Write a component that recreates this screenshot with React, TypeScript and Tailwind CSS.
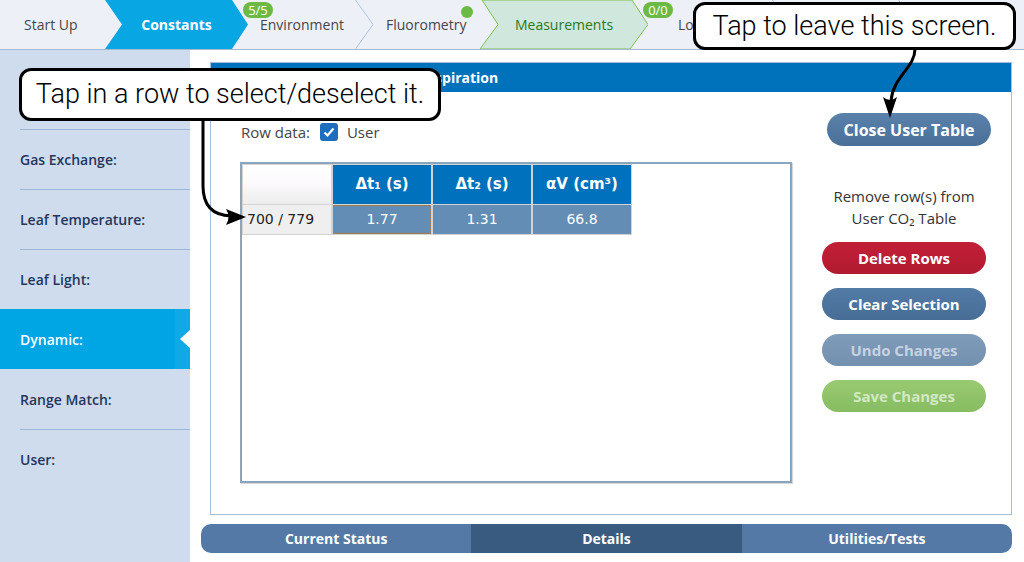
import React from "react";

const sideItems = [
  { name: "" },
  { name: "Gas Exchange:" },
  { name: "Leaf Temperature:" },
  { name: "Leaf Light:" },
  { name: "Dynamic:", active: true },
  { name: "Range Match:" },
  { name: "User:" },
];

const Sep = () => (
  <svg className="absolute left-0 top-0 h-[49px] w-[20px]" viewBox="0 0 20 49">
    <polyline points="0.5,0 18,24.5 0.5,49" fill="none" stroke="#a9c4e2" strokeWidth="1" />
  </svg>
);

const Badge = ({ text, left }: { text: string; left: number }) => (
  <span
    className="absolute top-[2px] h-[16px] w-[30px] rounded-full bg-[#6cb944] text-white text-[13px] leading-[16px] text-center"
    style={{ left }}
  >
    {text}
  </span>
);

const TopBar = () => (
  <div className="flex h-[50px] bg-[#eef0f7] border-b border-[#a5b9d2] text-[14px] font-medium text-[#474747]">
    <div className="relative w-[105px] flex items-center pl-[24px]">Start Up</div>
    <div className="relative w-[143px] flex items-center justify-center">
      <svg className="absolute inset-0" width="143" height="49" viewBox="0 0 143 49">
        <polygon points="0,0 127,0 143,24.5 127,49 0,49 17,24.5" fill="#09a6e4" />
      </svg>
      <span className="relative text-white font-bold">Constants</span>
    </div>
    <div className="relative w-[107px] flex items-center pl-[12px]">
      <Badge text="5/5" left={-5} />
      Environment
    </div>
    <div className="relative w-[125px] flex items-center pl-[31px]">
      <Sep />
      Fluorometry
      <span className="absolute left-[106px] top-[6px] w-[12px] h-[12px] rounded-full bg-[#6cb944]" />
    </div>
    <div className="relative w-[168px] flex items-center justify-center">
      <svg className="absolute inset-0" width="168" height="49" viewBox="0 0 168 49">
        <polygon
          points="2,0 152,0 168,24.5 150,49 0,49 18,24.5"
          fill="#cfe7dd"
          stroke="#7cc151"
          strokeWidth="1"
        />
      </svg>
      <span className="relative text-[#2c7a1b]">Measurements</span>
      <Badge text="0/0" left={163} />
    </div>
    <div className="relative w-[124px] flex items-center pl-[30px]">Log Files</div>
    <div className="relative w-[126px] flex items-center pl-[30px]">
      <Sep />
    </div>
    <div className="relative flex-1 flex items-center pl-[30px]">
      <Sep />
    </div>
  </div>
);

const Sidebar = () => (
  <aside className="w-[190px] bg-[#cfdcee] pt-[19px] text-[14px] font-semibold text-[#25365b]">
    {sideItems.map((item, i) => {
      const prevActive = i > 0 && sideItems[i - 1].active;
      const showLine = i > 0 && !item.active && !prevActive;
      if (item.active) {
        return (
          <div key={i} className="relative h-[60px] flex items-center pl-[20px] bg-[#00a5e4] text-white">
            <span>{item.name}</span>
            <div className="absolute right-0 top-0 h-full w-[15px] bg-[#0fa9e8]" />
            <svg className="absolute right-0 top-[21px]" width="10" height="18" viewBox="0 0 10 18">
              <polygon points="10,0 0,9 10,18" fill="#ffffff" />
            </svg>
          </div>
        );
      }
      return (
        <div key={i} className="pl-[20px]">
          <div className={`h-[60px] flex items-center ${showLine ? "border-t border-[#9fb6d4]" : ""}`}>
            {item.name}
          </div>
        </div>
      );
    })}
  </aside>
);

const Btn = ({ label, cls }: { label: string; cls: string }) => (
  <button className={`w-[164px] h-[32px] rounded-full text-[15px] font-bold ${cls}`}>{label}</button>
);

const DataTable = () => (
  <div className="w-[552px] h-[321px] border-2 border-[#8aa6bf] bg-white shadow-[1px_1px_1px_rgba(0,0,0,0.15)]">
    <div className="inline-grid grid-cols-[88px_98px_98px_98px] grid-rows-[39px_29px] gap-x-[2px] gap-y-px bg-[#d3d3d3] p-px font-['DejaVu_Sans',sans-serif] text-[14px]">
      <div className="bg-linear-to-b from-[#ffffff] via-[#fbf9fb] to-[#ededed]" />
      <div className="bg-[#0071bc] text-white font-bold text-[15px] flex items-center justify-center">Δt₁ (s)</div>
      <div className="bg-[#0071bc] text-white font-bold text-[15px] flex items-center justify-center">Δt₂ (s)</div>
      <div className="bg-[#0071bc] text-white font-bold text-[15px] flex items-center justify-center">αV (cm³)</div>
      <div className="bg-[#efefef] text-[#222] flex items-center pl-[4px]">700 / 779</div>
      <div className="bg-[#638db5] text-white flex items-center justify-center outline-1 outline-dotted outline-[#9c7a52] outline-offset-[-1px]">1.77</div>
      <div className="bg-[#638db5] text-white flex items-center justify-center">1.31</div>
      <div className="bg-[#638db5] text-white flex items-center justify-center">66.8</div>
    </div>
  </div>
);

const Panel = () => (
  <section className="flex-1 ml-[9px] border border-[#a6bedb] flex flex-col">
    <header className="h-[29px] bg-[#0072bc] text-white text-[14px] font-bold flex items-center pl-[52px]">
      User CO₂ Table – Dark Respiration
    </header>
    <div className="flex-1 flex">
      <div className="pl-[29px] pt-[30px]">
        <div className="h-[20px] flex items-center text-[15px] text-[#444] pl-px">
          <span>Row data:</span>
          <span className="ml-[10px] w-[18px] h-[18px] rounded-[3px] bg-[#1d6fbe] flex items-center justify-center">
            <svg width="14" height="14" viewBox="0 0 14 14">
              <polyline points="2.5,7.5 5.5,10.5 11.5,3.5" fill="none" stroke="#fff" strokeWidth="2.2" />
            </svg>
          </span>
          <span className="ml-[9px]">User</span>
        </div>
        <div className="mt-[20px]">
          <DataTable />
        </div>
      </div>
      <div className="flex-1 flex flex-col items-center pt-[21px] pl-[5px]">
        <button className="ml-[10px] w-[164px] h-[33px] rounded-full text-[16px] font-bold text-white bg-linear-to-b from-[#5a81aa] to-[#4a7099]">
          Close User Table
        </button>
        <p className="mt-[39px] text-[15px] leading-[22px] text-[#333] text-center">
          Remove row(s) from
          <br />
          User CO₂ Table
        </p>
        <div className="mt-[13px] flex flex-col gap-[14px]">
          <Btn label="Delete Rows" cls="text-white bg-linear-to-b from-[#c21f38] to-[#b11a30]" />
          <Btn label="Clear Selection" cls="text-white bg-linear-to-b from-[#527ba6] to-[#476d96]" />
          <Btn label="Undo Changes" cls="text-[#c6d3e1] bg-linear-to-b from-[#809cba] to-[#7390af]" />
          <Btn label="Save Changes" cls="text-[#d3e8c3] bg-linear-to-b from-[#98ca72] to-[#87bc61]" />
        </div>
      </div>
    </div>
  </section>
);

const Tabs = () => {
  const tabs = [
    { name: "Current Status", bg: "bg-[#5479a6]" },
    { name: "Details", bg: "bg-[#3a5b80]" },
    { name: "Utilities/Tests", bg: "bg-[#5479a6]" },
  ];
  return (
    <nav className="mt-[9px] h-[29px] rounded-[10px] overflow-hidden flex">
      {tabs.map((t) => (
        <div key={t.name} className={`flex-1 flex items-center justify-center ${t.bg}`}>
          <span className="text-white text-[14px] font-bold">{t.name}</span>
        </div>
      ))}
    </nav>
  );
};

const Callouts = () => (
  <>
    <svg className="absolute inset-0 pointer-events-none" width="1024" height="562" viewBox="0 0 1024 562">
      <path d="M915 49 C915 68 893 76 891 101" fill="none" stroke="#000" strokeWidth="3" />
      <path d="M890 118 L883 97 Q890 103 897 97 Z" fill="#000" />
      <path d="M203 120 L203 186 Q203 215 231 216" fill="none" stroke="#000" strokeWidth="3" />
      <path d="M246 217 L226 209 Q231 217 226 225 Z" fill="#000" />
    </svg>
    <div className="absolute left-[693px] top-[2px] w-[323px] h-[48px] rounded-[12px] border-[3px] border-black bg-white flex items-center justify-center font-['Roboto',sans-serif] font-light text-[27px] text-black">
      Tap to leave this screen.
    </div>
    <div className="absolute left-[19px] top-[68px] w-[422px] h-[53px] rounded-[12px] border-[3px] border-black bg-white flex items-center justify-center font-['Roboto',sans-serif] font-light text-[27px] text-black">
      Tap in a row to select/deselect it.
    </div>
  </>
);

export default function App() {
  return (
    <div className="relative w-[1024px] h-[562px] overflow-hidden bg-white font-['Open_Sans',sans-serif]">
      <TopBar />
      <div className="flex h-[512px]">
        <Sidebar />
        <main className="flex-1 flex flex-col pl-[11px] pr-[12px] pt-[12px] pb-[9px]">
          <Panel />
          <Tabs />
        </main>
      </div>
      <Callouts />
    </div>
  );
}
